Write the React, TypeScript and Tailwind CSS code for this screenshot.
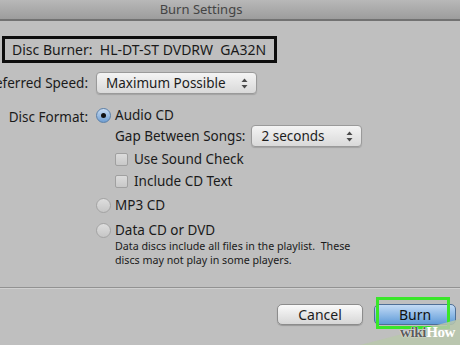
import React from "react"

const font = { fontFamily: '"Noto Sans", "DejaVu Sans", sans-serif' }

function Arrows() {
    return (
        <svg width="7" height="11" viewBox="0 0 7 11" className="shrink-0">
            <polygon points="3.5,0.5 6.5,4 0.5,4" fill="#4a4a4a" />
            <polygon points="0.5,7 6.5,7 3.5,10.5" fill="#4a4a4a" />
        </svg>
    )
}

function Select({ label, width }: { label: string; width: string }) {
    return (
        <div
            className={`${width} h-[22px] flex items-center justify-between pl-[9px] pr-[8px] rounded-[4px] border border-[#9a9a9a] bg-gradient-to-b from-[#f4f4f4] to-[#d9d9d9] shadow-[0_1px_1px_rgba(0,0,0,0.15)] text-[13.5px] text-[#1c1c1c]`}
        >
            <span>{label}</span>
            <Arrows />
        </div>
    )
}

function Radio({ checked }: { checked?: boolean }) {
    return checked ? (
        <span className="w-[15px] h-[15px] rounded-full border border-[#5a7fa8] bg-gradient-to-b from-[#c9dcf2] to-[#6f9ed2] flex items-center justify-center shrink-0">
            <span className="w-[5px] h-[5px] rounded-full bg-[#111]" />
        </span>
    ) : (
        <span className="w-[15px] h-[15px] rounded-full border border-[#a3a3a3] bg-gradient-to-b from-[#dedede] to-[#c6c6c6] shrink-0" />
    )
}

function Checkbox() {
    return <span className="w-[13px] h-[13px] rounded-[2px] border border-[#a0a0a0] bg-gradient-to-b from-[#dcdcdc] to-[#c8c8c8] shrink-0" />
}

function Label({ children }: { children: React.ReactNode }) {
    return (
        <div className="w-[88px] shrink-0 flex justify-end whitespace-nowrap">
            <span>{children}</span>
        </div>
    )
}

export default function App() {
    return (
        <div className="relative w-[460px] h-[345px] overflow-hidden bg-[#bfbfbf] text-[#1a1a1a]" style={font}>
            {/* title bar */}
            <div className="h-[21px] flex items-center justify-center pr-[58px] bg-gradient-to-b from-[#b8b8b8] to-[#9d9d9d] border-b-2 border-[#727272] text-[13px] text-[#444]">
                Burn Settings
            </div>

            <div className="flex flex-col text-[13.5px]">
                {/* disc burner */}
                <div className="mt-[15px] ml-[2px] w-[275px] h-[27px] border-[3px] border-[#0d0d0d] flex items-center pl-[7px] whitespace-pre text-[14px]">
                    Disc Burner:  HL-DT-ST DVDRW  GA32N
                </div>

                {/* speed */}
                <div className="mt-[9px] flex items-center">
                    <Label>Preferred Speed:</Label>
                    <div className="ml-[8px]">
                        <Select label="Maximum Possible" width="w-[161px]" />
                    </div>
                </div>

                {/* format */}
                <div className="mt-[13px] flex items-start">
                    <Label>Disc Format:</Label>
                    <div className="ml-[8px] flex flex-col">
                        <div className="flex items-center gap-[4px] h-[17px]">
                            <Radio checked />
                            <span>Audio CD</span>
                        </div>
                        <div className="ml-[19px] flex flex-col">
                            <div className="mt-[1px] flex items-center">
                                <span>Gap Between Songs:</span>
                                <div className="ml-[6px]">
                                    <Select label="2 seconds" width="w-[111px]" />
                                </div>
                            </div>
                            <div className="mt-[4px] flex items-center gap-[6px] h-[17px]">
                                <Checkbox />
                                <span>Use Sound Check</span>
                            </div>
                            <div className="mt-[5px] flex items-center gap-[6px] h-[17px]">
                                <Checkbox />
                                <span>Include CD Text</span>
                            </div>
                        </div>
                        <div className="mt-[7px] flex items-center gap-[4px] h-[17px]">
                            <Radio />
                            <span>MP3 CD</span>
                        </div>
                        <div className="mt-[8px] flex items-center gap-[4px] h-[17px]">
                            <Radio />
                            <span>Data CD or DVD</span>
                        </div>
                        <p className="ml-[19px] mt-0 text-[10.7px] leading-[14px] whitespace-pre">
                            {"Data discs include all files in the playlist.  These\ndiscs may not play in some players."}
                        </p>
                    </div>
                </div>

                {/* separator */}
                <div className="mt-[20px] h-[2px] border-t border-[#929292] border-b-[#d0d0d0] border-b" />

                {/* buttons */}
                <div className="mt-[15px] flex justify-end gap-[11px] pr-[4px]">
                    <button className="w-[86px] h-[21px] rounded-[5px] border border-[#8c8c8c] bg-gradient-to-b from-[#fafafa] to-[#d6d6d6] text-[14px] leading-none text-[#1c1c1c] shadow-[0_1px_1px_rgba(0,0,0,0.2)]">
                        Cancel
                    </button>
                    <button className="relative w-[82px] h-[21px] rounded-[5px] border border-[#4f6f96] bg-gradient-to-b from-[#c3dbf5] to-[#5f9bd8] text-[14px] leading-none text-[#111]">
                        Burn
                        <span className="absolute left-[1px] top-[-8px] w-[74px] h-[32px] border-[3px] border-[#39e62a]" />
                    </button>
                </div>
            </div>

            {/* wikiHow watermark */}
            <svg className="absolute right-0 bottom-0" width="100" height="26" viewBox="0 0 100 26">
                <polygon points="0,26 100,0 100,26" fill="#b9c7ab" opacity="0.85" />
            </svg>
            <div
                className="absolute right-[5px] bottom-[5px] text-[15px] font-bold leading-none tracking-tight"
                style={{ fontFamily: '"Liberation Serif", serif' }}
            >
                <span className="text-[#5d5d5d] [text-shadow:0_0_1px_#fff,0_0_1px_#fff]">wiki</span>
                <span className="text-white">How</span>
            </div>
        </div>
    )
}
